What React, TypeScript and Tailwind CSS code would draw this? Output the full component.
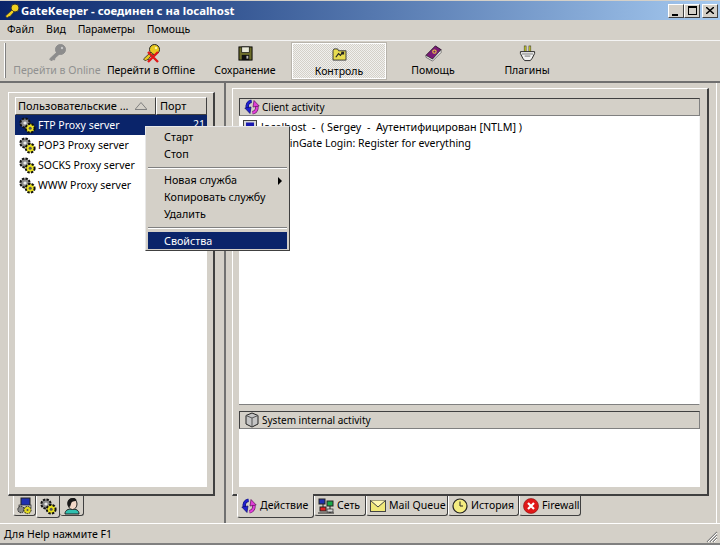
import React from "react";

const raised = "border border-t-white border-l-white border-r-[#404040] border-b-[#404040]";

function Gears() {
  return (
    <svg viewBox="0 0 17 17" width="17" height="17" className="shrink-0">
      <circle cx="6" cy="6" r="4.6" fill="#8a8a8a" stroke="#111" strokeWidth="2" strokeDasharray="2.4 1.2" />
      <circle cx="6" cy="6" r="1.6" fill="#e8e8e8" />
      <circle cx="11.2" cy="11.2" r="4.4" fill="#e8e020" stroke="#111" strokeWidth="2" strokeDasharray="2.4 1.2" />
      <circle cx="11.2" cy="11.2" r="1.5" fill="#555" />
    </svg>
  );
}

function Sync() {
  return (
    <svg viewBox="0 0 16 16" width="16" height="16" className="shrink-0">
      <path d="M7.5 2.2 C4 2.8 2.4 6 3.6 9.5" fill="none" stroke="#10106a" strokeWidth="3.4" />
      <path d="M7.5 2.2 C4 2.8 2.4 6 3.6 9.5" fill="none" stroke="#2020d0" strokeWidth="2.2" />
      <path d="M.8 9 L7 8 L6 14.5 Z" fill="#2020d0" stroke="#10106a" strokeWidth=".7" />
      <path d="M8.5 13.8 C12 13.2 13.6 10 12.4 6.5" fill="none" stroke="#5a1058" strokeWidth="3.4" />
      <path d="M8.5 13.8 C12 13.2 13.6 10 12.4 6.5" fill="none" stroke="#e040d8" strokeWidth="2.2" />
      <path d="M15.2 7 L9 8 L10 1.5 Z" fill="#e040d8" stroke="#5a1058" strokeWidth=".7" />
    </svg>
  );
}

function KeyIcon({ gray, x }: { gray?: boolean; x?: boolean }) {
  const f = gray ? "#8c8c8c" : "#e8c820";
  const s = gray ? "#8c8c8c" : "#222";
  return (
    <svg viewBox="0 0 20 20" width="20" height="20">
      <circle cx="13.5" cy="6.5" r="5" fill={f} stroke={s} />
      <path d="M10 9 L2.5 16 L4.5 18 L6 16.5 L7.5 17 L8 15 L12 11.5 Z" fill={f} stroke={s} strokeWidth=".8" />
      <circle cx="15" cy="5" r="1.2" fill={gray ? "#c8c8c8" : "#fff6a0"} />
      {x && <path d="M7 9 L17 19 M17 9 L7 19" stroke="#e01818" strokeWidth="2.4" />}
    </svg>
  );
}

function Floppy() {
  return (
    <svg viewBox="0 0 16 16" width="15" height="15">
      <rect x="1" y="1" width="14" height="14" fill="#6e6e2a" stroke="#000" />
      <rect x="4" y="1" width="8" height="6" fill="#e8e8d8" stroke="#000" strokeWidth=".7" />
      <rect x="4" y="9.5" width="8" height="5.5" fill="#101010" />
      <rect x="9" y="10.5" width="2" height="3" fill="#bbb" />
    </svg>
  );
}

function Folder() {
  return (
    <svg viewBox="0 0 16 14" width="15" height="13">
      <path d="M1 3 L1 13 L15 13 L15 3 L7 3 L6 1 L2 1 Z" fill="#e8dc50" stroke="#333" />
      <path d="M4 10 L7 6 L9 8 L11 5" stroke="#222" fill="none" strokeWidth="1.2" />
      <rect x="10" y="4" width="3" height="3" fill="#222" />
    </svg>
  );
}

function Book() {
  return (
    <svg viewBox="0 0 18 18" width="17" height="17">
      <path d="M1 11 L11 1 L17 5 L8 15 Z" fill="#7a1a78" stroke="#2a0a2a" />
      <path d="M1 11 L1 13 L8 17 L17 8 L17 5 L8 15 Z" fill="#f0f0f0" stroke="#444" strokeWidth=".7" />
      <circle cx="10" cy="7" r="1.8" fill="none" stroke="#f0d040" strokeWidth="1.1" />
    </svg>
  );
}

function Plug() {
  return (
    <svg viewBox="0 0 18 18" width="17" height="17">
      <rect x="5.5" y="1" width="2" height="6" fill="#d8d820" stroke="#333" strokeWidth=".6" />
      <rect x="10.5" y="1" width="2" height="6" fill="#d8d820" stroke="#333" strokeWidth=".6" />
      <path d="M1.5 7 L16.5 7 L16.5 9 L14 14 L12 16.5 L6 16.5 L4 14 L1.5 9 Z" fill="#f2f2f2" stroke="#222" />
      <path d="M3 9.5 L15 9.5" stroke="#777" />
      <rect x="6" y="11" width="6" height="1.5" fill="#999" />
    </svg>
  );
}

function TabServer() {
  return (
    <svg viewBox="0 0 18 18" width="18" height="18">
      <rect x="5" y="1" width="9" height="8" fill="#2030b0" stroke="#222" />
      <rect x="3" y="8" width="12" height="3" fill="#c8c8c8" stroke="#222" strokeWidth=".7" />
      <circle cx="5" cy="12.5" r="3.2" fill="#888" stroke="#222" strokeDasharray="1.6 .8" />
      <circle cx="11.5" cy="13" r="3.6" fill="#e0d820" stroke="#222" strokeDasharray="1.6 .8" />
      <circle cx="11.5" cy="13" r="1" fill="#555" />
    </svg>
  );
}

function Person() {
  return (
    <svg viewBox="0 0 18 18" width="18" height="18">
      <path d="M2 17 C2 13 5 12 9 12 C13 12 16 13 16 17 Z" fill="#30c0b0" stroke="#222" />
      <ellipse cx="9.5" cy="7" rx="4.5" ry="5.5" fill="#f2d8c8" stroke="#222" />
      <path d="M5 9 C3 4 6 1 10 1 C13 1 14 3 13 4 C10 4 8 5 8 7 L7 10 Z" fill="#181818" />
    </svg>
  );
}

function Net() {
  return (
    <svg viewBox="0 0 16 16" width="16" height="16" className="shrink-0">
      <rect x="1" y="1" width="6" height="5" fill="#2030b0" stroke="#222" />
      <rect x="9" y="3" width="6" height="5" fill="#18a848" stroke="#222" />
      <rect x="2" y="9" width="6" height="4" fill="#e02020" stroke="#222" />
      <path d="M0 15 H16 M5 6 V9 M12 8 V15" stroke="#222" />
      <rect x="9" y="11" width="6" height="3" fill="#d8d8d8" stroke="#222" strokeWidth=".7" />
    </svg>
  );
}

function Mail() {
  return (
    <svg viewBox="0 0 16 12" width="16" height="12" className="shrink-0">
      <rect x=".5" y=".5" width="15" height="11" fill="#f0e878" stroke="#444" />
      <path d="M.5 .5 L8 7 L15.5 .5" fill="#fff8b0" stroke="#444" />
    </svg>
  );
}

function Clock() {
  return (
    <svg viewBox="0 0 16 16" width="16" height="16" className="shrink-0">
      <circle cx="8" cy="8" r="7" fill="#f4ec80" stroke="#222" strokeWidth="1.2" />
      <path d="M8 3.5 V8 L11 8" stroke="#222" fill="none" />
    </svg>
  );
}

function Fire() {
  return (
    <svg viewBox="0 0 16 16" width="16" height="16" className="shrink-0">
      <circle cx="8" cy="8" r="7.5" fill="#e01818" stroke="#801010" strokeWidth=".6" />
      <path d="M5 5 L11 11 M11 5 L5 11" stroke="#fff" strokeWidth="2.2" />
    </svg>
  );
}

function Cube() {
  return (
    <svg viewBox="0 0 16 16" width="16" height="16" className="shrink-0">
      <path d="M8 1 L14 3.5 L14 12 L8 15 L2 12 L2 3.5 Z" fill="#c4c4c4" stroke="#222" />
      <path d="M2 3.5 L8 6 L14 3.5 M8 6 V15" stroke="#555" fill="none" />
    </svg>
  );
}

function ToolBtn({ label, icon, dis, active }: { label: string; icon: React.ReactNode; dis?: boolean; active?: boolean }) {
  return (
    <div className={`w-[94px] h-[36px] flex flex-col items-center ${active ? "border border-white outline outline-1 outline-[#b8b4ac] bg-[repeating-conic-gradient(#d4d0c8_0_25%,#f0f0ee_0_50%)] bg-[length:2px_2px]" : ""}`}>
      <div className="h-[20px] flex items-center justify-center">{icon}</div>
      <div className={`leading-[14px] whitespace-nowrap ${dis ? "text-[#909090]" : ""}`}>{label}</div>
    </div>
  );
}

function Row({ name, port, sel }: { name: string; port?: string; sel?: boolean }) {
  return (
    <div className={`h-[20px] flex items-center pl-[4px] pr-[2px] ${sel ? "bg-[#0a246a] text-white" : ""}`}>
      <Gears />
      <span className="ml-[2px] pt-[1px] flex-1 whitespace-nowrap">{name}</span>
      {port && <span>{port}</span>}
    </div>
  );
}

function PanelHead({ icon, text }: { icon: React.ReactNode; text: string }) {
  return (
    <div className="h-[18px] shrink-0 flex items-center pl-[4px] gap-[2px] bg-[#d4d0c8] border border-t-[#404040] border-l-[#404040] border-r-[#808080] border-b-[#808080]">
      {icon}
      <span className="pt-[1px] text-[10px]">{text}</span>
    </div>
  );
}

function BTab({ icon, label, active, w }: { icon: React.ReactNode; label: string; active?: boolean; w: string }) {
  return (
    <div className={`${w} flex items-center bg-[#d4d0c8] border-l border-l-white border-r border-r-[#404040] border-b border-b-[#404040] rounded-b-[3px] ${active ? "h-[24px] -mt-[2px] pl-[3px] gap-[3px]" : "h-[20px] pl-[3px] gap-[3px]"}`}>
      {icon}
      <span className="whitespace-nowrap">{label}</span>
    </div>
  );
}

export default function App() {
  return (
    <div className="w-[720px] h-[545px] bg-[#d4d0c8] text-black text-[10.5px] flex flex-col overflow-hidden relative" style={{ fontFamily: '"Noto Sans", sans-serif' }}>
      {/* title */}
      <div className="h-[19px] shrink-0 mt-px flex items-center pl-[4px] pr-[2px] bg-gradient-to-r from-[#0a246a] to-[#a6caf0]">
        <svg viewBox="0 0 16 16" width="16" height="16">
          <circle cx="11" cy="5" r="4" fill="#f0d020" stroke="#333" />
          <path d="M8 7 L1.5 13 L3 15 L5 13.5 L6 13.5 L10 9 Z" fill="#f0d020" stroke="#333" strokeWidth=".7" />
        </svg>
        <span className="ml-[1px] flex-1 font-bold text-white text-[11.4px]">GateKeeper - соединен с на localhost</span>
        <div className="flex">
          <div className={`w-[16px] h-[14px] bg-[#d4d0c8] ${raised} flex items-end pb-[1px] pl-[3px]`}><div className="w-[6px] h-[2px] bg-black" /></div>
          <div className={`w-[16px] h-[14px] bg-[#d4d0c8] ${raised} flex items-center justify-center`}><div className="w-[9px] h-[9px] border border-black border-t-2" /></div>
          <div className={`ml-[2px] w-[16px] h-[14px] bg-[#d4d0c8] ${raised} flex items-center justify-center`}>
            <svg viewBox="0 0 8 7" width="8" height="7"><path d="M0 0 L8 7 M8 0 L0 7" stroke="#000" strokeWidth="1.4" /></svg>
          </div>
        </div>
      </div>
      {/* menu */}
      <div className="h-[20px] shrink-0 flex items-center pl-[7px] gap-[12px]">
        <span>Файл</span><span>Вид</span><span className="tracking-[-0.2px]">Параметры</span><span>Помощь</span>
      </div>
      {/* toolbar */}
      <div className="h-[43px] shrink-0 border-t border-t-[#f4f4f4] border-b-2 border-b-[#707070] flex items-start pt-[2px] pl-[4px]">
        <div className="w-[2px] h-[35px] border-l border-l-white border-r border-r-[#808080] mr-[4px]" />
        <ToolBtn label="Перейти в Online" icon={<KeyIcon gray />} dis />
        <ToolBtn label="Перейти в Offline" icon={<KeyIcon x />} />
        <ToolBtn label="Сохранение" icon={<Floppy />} />
        <ToolBtn label="Контроль" icon={<Folder />} active />
        <ToolBtn label="Помощь" icon={<Book />} />
        <ToolBtn label="Плагины" icon={<Plug />} />
      </div>
      {/* body */}
      <div className="flex-1 flex min-h-0 mr-[3px] border-r border-r-white">
        {/* left */}
        <div className="w-[226px] shrink-0 flex flex-col pt-[9px] pl-[8px] border-r-2 border-r-[#707070]">
          <div className="w-[207px] h-[404px] shrink-0 border border-t-white border-l-white border-r-2 border-r-[#404040] border-b-2 border-b-[#404040] pt-[4px] pl-[6px] pr-[6px] pb-[7px] flex flex-col">
            <div className="flex-1 flex flex-col bg-white">
              <div className="h-[18px] shrink-0 flex text-[11px]">
                <div className={`w-[141px] bg-[#d4d0c8] ${raised} flex items-center pl-[2px] relative`}>
                  <span className="whitespace-nowrap">Пользовательские ...</span>
                  <svg viewBox="0 0 12 8" width="12" height="8" className="absolute right-[8px] top-[4px]"><path d="M0 7.5 H12 L6 .5 Z" fill="none" stroke="#808080" /></svg>
                </div>
                <div className={`flex-1 bg-[#d4d0c8] ${raised} flex items-center pl-[3px]`}>Порт</div>
              </div>
              <Row name="FTP Proxy server" port="21" sel />
              <Row name="POP3 Proxy server" />
              <Row name="SOCKS Proxy server" />
              <Row name="WWW Proxy server" />
            </div>
          </div>
          <div className="flex pl-[5px]">
            <div className="w-[23px] h-[20px] flex items-center justify-center border-l border-l-white border-r border-r-[#404040] border-b border-b-[#404040] rounded-b-[3px]"><TabServer /></div>
            <div className="w-[24px] h-[22px] flex items-center justify-center border-l border-l-white border-r border-r-[#404040] border-b border-b-[#404040] rounded-b-[3px]"><Gears /></div>
            <div className="w-[24px] h-[20px] flex items-center justify-center border-r border-r-[#404040] border-b border-b-[#404040] rounded-b-[3px]"><Person /></div>
          </div>
        </div>
        {/* right */}
        <div className="flex-1 flex flex-col pt-[5px] pl-[6px]">
          <div className="w-[477px] h-[408px] shrink-0 border border-t-white border-l-white border-r-2 border-r-[#404040] border-b-2 border-b-[#404040] pt-[9px] pl-[6px] pr-[7px] pb-[7px] flex flex-col">
            <PanelHead icon={<Sync />} text="Client activity" />
            <div className="flex-1 bg-white border-b border-b-[#808080] border-r border-r-[#f4f4f4] pl-[4px] pt-[3px]">
              <div className="h-[16px] flex items-center gap-[4px]">
                <svg viewBox="0 0 14 14" width="14" height="14" className="shrink-0"><rect x=".5" y=".5" width="13" height="13" fill="#d8d8d8" stroke="#444" /><rect x="3" y="2.5" width="8" height="8" fill="#1a1ab0" /></svg>
                <span className="whitespace-pre text-[10.75px]">localhost  -  ( Sergey  -  Аутентифицирован [NTLM] )</span>
              </div>
              <div className="h-[17px] flex items-center pl-[37px]">WinGate Login: Register for everything</div>
            </div>
            <div className="h-[6px] shrink-0" />
            <PanelHead icon={<Cube />} text="System internal activity" />
            <div className="h-[58px] shrink-0 bg-white" />
          </div>
          <div className="flex pl-[5px]">
            <BTab w="w-[77px]" icon={<Sync />} label="Действие" active />
            <BTab w="w-[52px]" icon={<Net />} label="Сеть" />
            <BTab w="w-[82px]" icon={<Mail />} label="Mail Queue" />
            <BTab w="w-[71px]" icon={<Clock />} label="История" />
            <BTab w="w-[62px]" icon={<Fire />} label="Firewall" />
          </div>
        </div>
      </div>
      {/* status */}
      <div className="h-[22px] shrink-0 border-t border-t-white relative flex items-center pl-[4px]">
        <span>Для Help нажмите F1</span>
        <svg viewBox="0 0 13 13" width="13" height="13" className="absolute right-[2px] bottom-[2px]"><path d="M12 2 L2 12 M12 5 L5 12 M12 8 L8 12" stroke="#808080" strokeWidth="1.2" /><path d="M12 3 L3 12 M12 6 L6 12 M12 9 L9 12" stroke="#fff" /></svg>
        <div className="absolute left-0 right-0 bottom-0 h-[2px] bg-[#808080]" />
      </div>
      {/* context menu */}
      <div className="absolute left-[145px] top-[126px] w-[145px] h-[125px] bg-[#d4d0c8] border border-t-[#e8e8e8] border-l-[#e8e8e8] border-r-[#404040] border-b-[#404040] px-[2px] pt-[2px] pb-[1px] flex flex-col text-[10.75px]">
        <div className="h-[17px] shrink-0 flex items-center pl-[16px]">Старт</div>
        <div className="h-[17px] shrink-0 flex items-center pl-[16px]">Стоп</div>
        <div className="h-[9px] shrink-0 flex items-center"><div className="w-full h-[2px] border-t border-t-[#808080] border-b border-b-white" /></div>
        <div className="h-[17px] shrink-0 flex items-center pl-[16px] relative">Новая служба<div className="absolute right-[5px] top-[5px] border-l-[4px] border-l-black border-y-[4px] border-y-transparent" /></div>
        <div className="h-[17px] shrink-0 flex items-center pl-[16px]">Копировать службу</div>
        <div className="h-[17px] shrink-0 flex items-center pl-[16px]">Удалить</div>
        <div className="h-[9px] shrink-0 flex items-center"><div className="w-full h-[2px] border-t border-t-[#808080] border-b border-b-white" /></div>
        <div className="h-[17px] shrink-0 flex items-center pl-[16px] pt-[1px] bg-[#0a246a] text-white">Свойства</div>
      </div>
    </div>
  );
}
